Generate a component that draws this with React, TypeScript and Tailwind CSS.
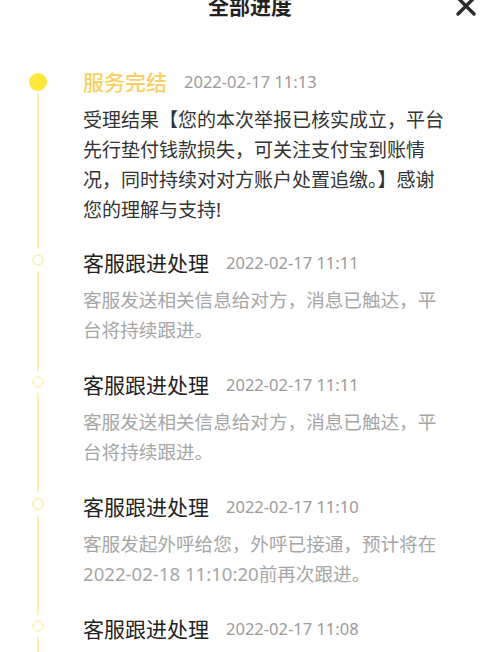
import React from 'react';

interface Step {
  title: string;
  time: string;
  lines: string[];
  done?: boolean;
}

const steps: Step[] = [
  {
    title: '服务完结',
    time: '2022-02-17 11:13',
    lines: [
      '受理结果【您的本次举报已核实成立，平台',
      '先行垫付钱款损失，可关注支付宝到账情',
      '况，同时持续对对方账户处置追缴。】感谢',
      '您的理解与支持!',
    ],
    done: true,
  },
  {
    title: '客服跟进处理',
    time: '2022-02-17 11:11',
    lines: ['客服发送相关信息给对方，消息已触达，平', '台将持续跟进。'],
  },
  {
    title: '客服跟进处理',
    time: '2022-02-17 11:11',
    lines: ['客服发送相关信息给对方，消息已触达，平', '台将持续跟进。'],
  },
  {
    title: '客服跟进处理',
    time: '2022-02-17 11:10',
    lines: ['客服发起外呼给您，外呼已接通，预计将在', '2022-02-18 11:10:20前再次跟进。'],
  },
  {
    title: '客服跟进处理',
    time: '2022-02-17 11:08',
    lines: ['客服已受理您的举报，将尽快为您处理，请', '耐心等待。'],
  },
];

const StepRow: React.FC<{ step: Step; first: boolean }> = ({ step, first }) => (
  <div className="flex">
    <div className="w-[76px] mr-[7px] flex flex-col items-center shrink-0">
      {first ? (
        <>
          <span className="mt-[6px] w-[18px] h-[18px] rounded-full bg-[#ffe83c]"></span>
          <span className="mt-[2px] w-[2px] flex-1 bg-[#fcf3a6]"></span>
        </>
      ) : (
        <>
          <span className="w-[2px] h-[1px] bg-[#fcf3a6]"></span>
          <span className="mt-[5px] w-[12px] h-[12px] rounded-full border-2 border-[#fcf2c0]"></span>
          <span className="mt-[5px] w-[2px] flex-1 bg-[#fcf3a6]"></span>
        </>
      )}
    </div>
    <div className={first ? 'flex-1 pb-[23px]' : 'flex-1 pb-[25px]'}>
      <div className="flex items-center h-[30px]">
        <span
          className={
            step.done
              ? 'text-[21px] leading-[30px] font-medium text-[#f9d063]'
              : 'text-[21px] leading-[30px] text-[#222222]'
          }
        >
          {step.title}
        </span>
        <span className="ml-[17px] text-[16.5px] leading-[30px] text-[#9b9b9b] font-['Noto_Sans',sans-serif]">
          {step.time}
        </span>
      </div>
      <p
        className={
          step.done
            ? 'mt-[8px] text-[19px] leading-[30px] text-[#333333] whitespace-nowrap'
            : 'mt-[7px] text-[18.6px] leading-[30px] text-[#a6a6a6] whitespace-nowrap'
        }
      >
        {step.lines.map((l, i) => (
          <React.Fragment key={i}>
            {l}
            {i < step.lines.length - 1 && <br />}
          </React.Fragment>
        ))}
      </p>
    </div>
  </div>
);

export default function App() {
  return (
    <div className="w-[500px] h-[652px] overflow-hidden bg-white font-['Noto_Sans','Noto_Sans_CJK_SC',sans-serif]">
      <div className="relative h-[67px] flex flex-col">
        <div className="-mt-[8px] flex justify-center">
          <h1 className="text-[21px] leading-[28px] font-bold text-[#222222]">全部进度</h1>
        </div>
        <button className="absolute right-[21px] -top-[7px] w-[26px] h-[26px] flex items-center justify-center">
          <svg width="22" height="22" viewBox="0 0 22 22" fill="none">
            <path d="M3 3 L19 19 M19 3 L3 19" stroke="#2b2b2b" strokeWidth="3.4" strokeLinecap="round" />
          </svg>
        </button>
      </div>
      <div>
        {steps.map((s, i) => (
          <StepRow key={i} step={s} first={i === 0} />
        ))}
      </div>
    </div>
  );
}
